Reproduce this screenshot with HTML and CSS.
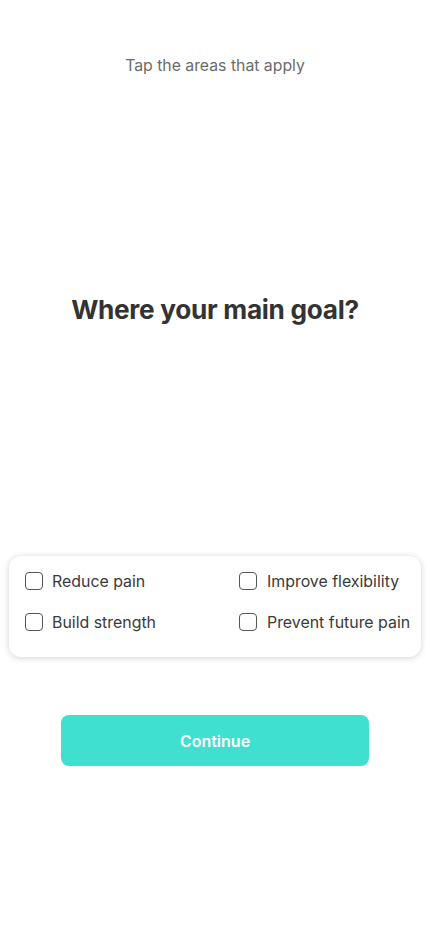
FILE: index.html
```html
<!DOCTYPE html>
<html lang="en">
<head>
<meta charset="utf-8">
<meta name="viewport" content="width=device-width, initial-scale=1">
<title>Where your main goal?</title>
<link rel="stylesheet" href="styles.css">
</head>
<body>
<main class="screen">
  <p class="hint">Tap the areas that apply</p>
  <h1 class="title">Where your main goal?</h1>
  <section class="card">
    <label class="option"><span class="box"></span><span>Reduce pain</span></label>
    <label class="option"><span class="box"></span><span>Improve flexibility</span></label>
    <label class="option"><span class="box"></span><span>Build strength</span></label>
    <label class="option"><span class="box"></span><span>Prevent future pain</span></label>
  </section>
  <button class="cta">Continue</button>
</main>
</body>
</html>
```

FILE: styles.css
```css
* { box-sizing: border-box; }
html, body { margin: 0; padding: 0; background: #fff; }
body {
  font-family: Inter, "Noto Sans", "Liberation Sans", sans-serif;
  color: #333;
  width: 430px;
  height: 932px;
}
.screen {
  display: flex;
  flex-direction: column;
  align-items: center;
}
.hint {
  margin: 56px 0 0;
  font-size: 15.8px;
  line-height: 20px;
  color: #6b6b6b;
}
.title {
  margin: 217px 0 0;
  font-size: 26.2px;
  line-height: 34px;
  font-weight: 700;
  color: #333;
  letter-spacing: -0.3px;
}
.card {
  margin-top: 229px;
  align-self: flex-start;
  margin-left: 9px;
  width: 412px;
  height: 101px;
  background: #fff;
  border-radius: 12px;
  box-shadow: 0 1px 6px rgba(0,0,0,0.18);
  padding: 15px 0 0 16px;
  display: grid;
  grid-template-columns: 214px auto;
  row-gap: 21px;
  align-content: start;
}
.option {
  display: flex;
  align-items: center;
  gap: 9px;
  height: 20px;
  font-size: 15.9px;
  color: #3a3a3a;
  white-space: nowrap;
}
.option:nth-child(even) .box + span { margin-left: 1px; }
.box {
  width: 18px;
  height: 18px;
  border: 1.3px solid #555;
  border-radius: 4px;
  flex: none;
}
.cta {
  margin-top: 58px;
  width: 308px;
  height: 51px;
  border: none;
  border-radius: 8px;
  background: #40e0d0;
  color: #fff;
  font-family: Inter, "Noto Sans", "Liberation Sans", sans-serif;
  font-size: 16px;
  font-weight: 600;
}
```
